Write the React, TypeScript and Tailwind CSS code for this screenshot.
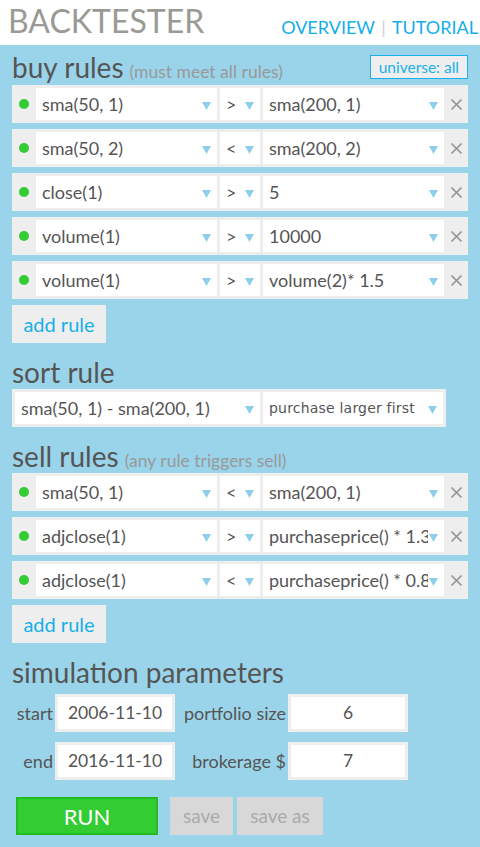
import React from 'react';

interface Rule {
  left: string;
  op: string;
  right: string;
}

const buyRules: Rule[] = [
  { left: 'sma(50, 1)', op: '>', right: 'sma(200, 1)' },
  { left: 'sma(50, 2)', op: '<', right: 'sma(200, 2)' },
  { left: 'close(1)', op: '>', right: '5' },
  { left: 'volume(1)', op: '>', right: '10000' },
  { left: 'volume(1)', op: '>', right: 'volume(2)* 1.5' },
];

const sellRules: Rule[] = [
  { left: 'sma(50, 1)', op: '<', right: 'sma(200, 1)' },
  { left: 'adjclose(1)', op: '>', right: 'purchaseprice() * 1.3' },
  { left: 'adjclose(1)', op: '<', right: 'purchaseprice() * 0.8' },
];

const Arrow = () => (
  <svg width="9" height="8" viewBox="0 0 9 8" className="absolute right-[6px] top-[14px]">
    <polygon points="0,0 9,0 4.5,8" fill="#8dcfe9" />
  </svg>
);

const Select: React.FC<{ value: string; className?: string; textClass?: string }> = ({
  value,
  className = '',
  textClass = 'text-[18px]',
}) => (
  <div className={`relative h-[32px] bg-white flex items-center pl-[6px] pr-[16px] overflow-hidden ${className}`}>
    <span className={`whitespace-nowrap overflow-hidden text-[#555] ${textClass}`}>{value}</span>
    <Arrow />
  </div>
);

const RuleRow: React.FC<{ rule: Rule }> = ({ rule }) => (
  <div className="flex items-center h-[38px] w-[456px] bg-[#eeeeee] pl-[7px]">
    <span className="w-[10px] h-[10px] rounded-full bg-[#33cc33]" />
    <div className="flex gap-[3px] ml-[7px]">
      <Select value={rule.left} className="w-[181px]" />
      <Select value={rule.op} className="w-[40px]" />
      <Select value={rule.right} className="w-[181px]" />
    </div>
    <div className="w-[24px] flex justify-center">
      <svg width="11" height="11" viewBox="0 0 11 11">
        <path d="M0.5 0.5 L10.5 10.5 M10.5 0.5 L0.5 10.5" stroke="#999" strokeWidth="1.6" />
      </svg>
    </div>
  </div>
);

const Heading: React.FC<{ title: string; note?: string; className?: string }> = ({ title, note, className = '' }) => (
  <div className={`flex items-baseline h-[30px] ${className}`}>
    <h2 className="text-[28px] leading-[30px] text-[#555]">{title}</h2>
    {note && <span className="ml-[6px] text-[17.5px] text-[#999]">{note}</span>}
  </div>
);

const AddRule = () => (
  <button className="mt-[6px] h-[38px] w-[94px] bg-[#eeeeee] text-[20px] text-[#14b0ea]">add rule</button>
);

const Field: React.FC<{ label: string; labelWidth: string; value: string }> = ({ label, labelWidth, value }) => (
  <>
    <span className={`${labelWidth} text-right text-[18px] text-[#555] mr-[2px]`}>{label}</span>
    <div className="w-[120px] h-[38px] border-[3px] border-[#eeeeee] bg-white flex items-center justify-center text-[17.5px] text-[#555]">
      {value}
    </div>
  </>
);

export default function App() {
  return (
    <div className="min-h-[847px] bg-[#9ad4ea] font-['Lato',sans-serif]">
      <header className="h-[45px] bg-white flex justify-between">
        <div className="pl-[8px] pt-[1px] text-[32px] leading-[40px] text-[#9a9a95]">BACKTESTER</div>
        <nav className="pt-[15px] pr-[2px] text-[18px] leading-[24px] text-[#14aee8]">
          OVERVIEW <span className="text-[#d0d0d0] mx-[2px]">|</span> TUTORIAL
        </nav>
      </header>

      <main className="px-[12px] pb-[12px]">
        <div className="flex justify-between items-start mt-[7px] w-[456px]">
          <Heading title="buy rules" note="(must meet all rules)" />
          <div className="mt-[3px] h-[24px] px-[8px] border border-[#1ab0ea] bg-[#eeeeee] text-[15.5px] leading-[22px] text-[#1ab0ea]">
            universe: all
          </div>
        </div>
        <div className="mt-[3px] flex flex-col gap-[6px]">
          {buyRules.map((r, i) => (
            <RuleRow key={i} rule={r} />
          ))}
        </div>
        <AddRule />

        <Heading title="sort rule" className="mt-[14px]" />
        <div className="mt-[2px] w-[434px] bg-[#eeeeee] p-[3px] flex gap-[3px]">
          <Select value="sma(50, 1) - sma(200, 1)" className="w-[245px]" />
          <Select
            value="purchase larger first"
            className="w-[180px] pl-[4px]"
            textClass="text-[14px] font-['DejaVu_Sans',sans-serif] tracking-[0.2px]"
          />
        </div>

        <Heading title="sell rules" note="(any rule triggers sell)" className="mt-[14px]" />
        <div className="mt-[2px] flex flex-col gap-[6px]">
          {sellRules.map((r, i) => (
            <RuleRow key={i} rule={r} />
          ))}
        </div>
        <AddRule />

        <Heading title="simulation parameters" className="mt-[14px]" />
        <div className="mt-[7px] flex flex-col gap-[10px]">
          <div className="flex items-center">
            <Field label="start" labelWidth="w-[41px]" value="2006-11-10" />
            <Field label="portfolio size" labelWidth="w-[111px]" value="6" />
          </div>
          <div className="flex items-center">
            <Field label="end" labelWidth="w-[41px]" value="2016-11-10" />
            <Field label="brokerage $" labelWidth="w-[111px]" value="7" />
          </div>
        </div>

        <div className="mt-[17px] ml-[4px] flex">
          <button className="w-[142px] h-[38px] bg-[#33cc33] border-2 border-[#22bb22] text-white text-[22px]">RUN</button>
          <button className="ml-[12px] w-[63px] h-[38px] bg-[#d8d8d8] text-[#aaa] text-[19px]">save</button>
          <button className="ml-[4px] w-[86px] h-[38px] bg-[#d8d8d8] text-[#aaa] text-[19px]">save as</button>
        </div>
      </main>
    </div>
  );
}
